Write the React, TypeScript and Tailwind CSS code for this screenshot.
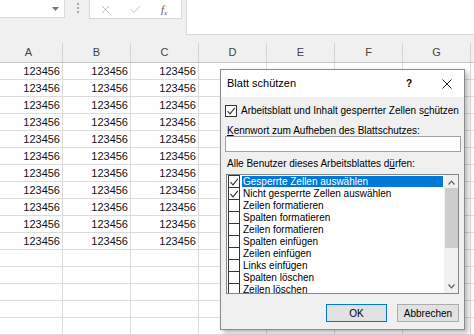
import React from "react";

const cols = ["A", "B", "C", "D", "E", "F", "G", ""];
const rows = Array.from({ length: 16 }, (_, i) => i < 11);

const items: [string, boolean][] = [
  ["Gesperrte Zellen auswählen", true],
  ["Nicht gesperrte Zellen auswählen", true],
  ["Zeilen formatieren", false],
  ["Spalten formatieren", false],
  ["Zeilen formatieren", false],
  ["Spalten einfügen", false],
  ["Zeilen einfügen", false],
  ["Links einfügen", false],
  ["Spalten löschen", false],
  ["Zeilen löschen", false],
];

function Check() {
  return (
    <svg width="10" height="10" viewBox="0 0 10 10" className="block">
      <path d="M1.5 5.2 L4 7.8 L8.8 1.8" fill="none" stroke="#333" strokeWidth="1.1" />
    </svg>
  );
}

export default function App() {
  return (
    <div className="relative w-[474px] h-[335px] overflow-hidden bg-white font-['Liberation_Sans',Arial,sans-serif] text-black">
      {/* formula bar */}
      <div className="flex items-start h-[43px] bg-[#f0f0f0]">
        <div className="flex items-center justify-end w-[65px] h-[18px] bg-white border-r border-b border-[#d8d8d8] pr-[5px]">
          <svg width="7" height="4" viewBox="0 0 7 4">
            <path d="M0 0 L7 0 L3.5 4 Z" fill="#777" />
          </svg>
        </div>
        <div className="flex flex-col gap-[2px] ml-[12px] mt-[3px]">
          <span className="w-[2px] h-[2px] bg-[#a8a8a8]" />
          <span className="w-[2px] h-[2px] bg-[#a8a8a8]" />
          <span className="w-[2px] h-[2px] bg-[#a8a8a8]" />
        </div>
        <div className="flex items-center w-[93px] h-[19px] ml-[10px] bg-white border-x border-b border-[#d8d8d8]">
          <svg width="9" height="9" viewBox="0 0 9 9" className="ml-[11px]">
            <path d="M1 1 L8 8 M8 1 L1 8" stroke="#bdbdbd" strokeWidth="1" />
          </svg>
          <svg width="11" height="9" viewBox="0 0 11 9" className="ml-[20px]">
            <path d="M1 4.5 L4 7.5 L10 1" fill="none" stroke="#c3c3c3" strokeWidth="1" />
          </svg>
          <span className="ml-[20px] font-['Liberation_Serif',serif] italic text-[11px] text-[#555]">
            f<sub className="text-[7px]">x</sub>
          </span>
        </div>
        <div className="flex-1 h-[35px] ml-[4px] bg-white border-l border-b border-[#d8d8d8]" />
      </div>

      {/* column headers */}
      <div className="flex h-[20px] ml-[-5px] bg-[#f0f0f0] border-b border-[#c8c8c8]">
        {cols.map((c, i) => (
          <div key={i} className="flex items-center justify-center w-[68px] shrink-0 border-r border-[#d4d4d4] text-[11px] text-[#444]">
            {c}
          </div>
        ))}
      </div>

      {/* cells */}
      {rows.map((filled, r) => (
        <div key={r} className="flex h-[17px] ml-[-5px] border-b border-[#dcdcdc]">
          {cols.map((c, i) => (
            <div key={i} className="flex items-center justify-end w-[68px] shrink-0 border-r border-[#dcdcdc] pr-[2px] text-[11px] text-[#111]">
              {filled && i < 3 ? "123456" : ""}
            </div>
          ))}
        </div>
      ))}

      {/* dialog */}
      <div className="absolute left-[220px] top-[69px] w-[245px] h-[261px] flex flex-col bg-[#f0f0f0] border border-[#8a8a8a] shadow-[3px_3px_5px_rgba(0,0,0,0.28)] text-[10px]">
        <div className="flex items-center h-[27px] bg-white pl-[6px] text-[11px]">
          <span>Blatt schützen</span>
          <span className="ml-auto mr-[30px] font-bold text-[10px]">?</span>
          <svg width="10" height="10" viewBox="0 0 10 10" className="mr-[12px]">
            <path d="M0.5 0.5 L9.5 9.5 M9.5 0.5 L0.5 9.5" stroke="#222" strokeWidth="1" />
          </svg>
        </div>

        <div className="flex items-center h-[13px] mt-[7px] ml-[4px]">
          <div className="flex items-center justify-center w-[12px] h-[12px] border border-[#333] bg-white">
            <Check />
          </div>
          <span className="ml-[4px]">
            Arbeitsblatt und Inhalt gesperrter Zellen s<u>c</u>hützen
          </span>
        </div>

        <div className="flex items-center h-[11px] mt-[8px] ml-[6px]">
          <span>
            <u>K</u>ennwort zum Aufheben des Blattschutzes:
          </span>
        </div>
        <div className="w-[236px] h-[16px] ml-[4px] bg-white border border-[#a0a0a0]" />

        <div className="flex items-center h-[12px] mt-[5px] ml-[6px]">
          <span>
            Alle Benutzer dieses Arbeitsblattes d<u>ü</u>rfen:
          </span>
        </div>

        <div className="flex w-[233px] h-[120px] mt-[5px] ml-[5px] bg-white border border-[#828790] overflow-hidden">
          <div className="flex flex-col flex-1 ml-px">
            {items.map(([label, checked], i) => (
              <div key={i} className="flex items-center h-[12px] shrink-0">
                <div
                  className={
                    i === items.length - 1
                      ? "flex items-center justify-center w-[12px] h-[12px] border border-[#333]"
                      : "flex items-center justify-center w-[12px] h-[12px] border-x border-t border-[#333]"
                  }
                >
                  {checked && <Check />}
                </div>
                <div
                  className={
                    i === 0
                      ? "flex items-center flex-1 h-[11px] ml-[2px] mr-[1px] pl-[1px] bg-[#0078d7] text-white"
                      : "flex items-center flex-1 h-[11px] ml-[2px] pl-[1px]"
                  }
                >
                  {label}
                </div>
              </div>
            ))}
          </div>
          <div className="flex flex-col items-center w-[14px] bg-[#f0f0f0]">
            <svg width="7" height="5" viewBox="0 0 7 5" className="mt-[5px]">
              <path d="M0.5 4.5 L3.5 1.2 L6.5 4.5" fill="none" stroke="#606060" strokeWidth="1.2" />
            </svg>
            <div className="w-[13px] h-[60px] mt-[3px] bg-[#cdcdcd]" />
            <svg width="7" height="5" viewBox="0 0 7 5" className="mt-auto mb-[4px]">
              <path d="M0.5 0.5 L3.5 3.8 L6.5 0.5" fill="none" stroke="#606060" strokeWidth="1.2" />
            </svg>
          </div>
        </div>

        <div className="flex justify-end gap-[10px] mt-[10px] mr-[5px]">
          <div className="flex items-center justify-center w-[61px] h-[18px] bg-[#e1e1e1] border border-[#0078d7]">
            OK
          </div>
          <div className="flex items-center justify-center w-[62px] h-[18px] bg-[#e1e1e1] border border-[#adadad]">
            Abbrechen
          </div>
        </div>
      </div>
    </div>
  );
}
